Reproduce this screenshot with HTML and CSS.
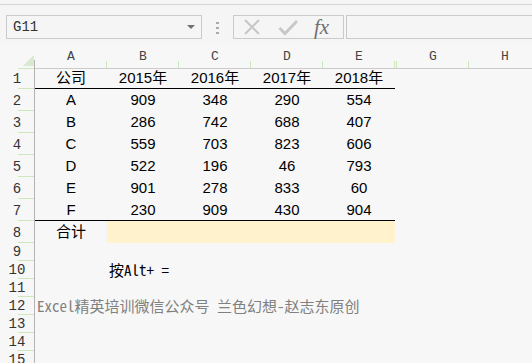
FILE: index.html
```html
<!DOCTYPE html>
<html lang="zh-CN">
<head>
    <meta charset="UTF-8">
    <title>合计 - Alt+=</title>
    <link rel="stylesheet" href="styles.css">
</head>
<body>
    <!-- Name box + formula bar -->
    <div class="toolbar">
        <div class="namebox">
            <span class="ref">G11</span>
            <span class="caret"></span>
        </div>
        <svg class="grip" width="3" height="12" viewBox="0 0 3 12">
            <rect x="0" y="0" width="3" height="2" fill="#aaa"/>
            <rect x="0" y="5" width="3" height="2" fill="#aaa"/>
            <rect x="0" y="10" width="3" height="2" fill="#aaa"/>
        </svg>
        <div class="fnbtns">
            <svg class="cancel" width="18" height="18" viewBox="0 0 18 18">
                <path d="M2 2 L16 16 M16 2 L2 16" stroke="#c8c8c8" stroke-width="2.2" fill="none"/>
            </svg>
            <svg class="enter" width="20" height="17" viewBox="0 0 20 17">
                <path d="M1.5 9 L7 14.5 L19 2" stroke="#c8c8c8" stroke-width="3" fill="none"/>
            </svg>
            <span class="fx">fx</span>
        </div>
        <div class="formula"></div>
    </div>

    <!-- Sheet -->
    <div class="sheet">
        <div class="row head">
            <div class="corner"></div>
            <div class="col">A</div>
            <div class="col">B</div>
            <div class="col">C</div>
            <div class="col">D</div>
            <div class="col">E</div>
            <div class="col"></div>
            <div class="col">G</div>
            <div class="col">H</div>
        </div>

        <div class="row tall">
            <div class="rh">1</div>
            <div class="c line">公司</div>
            <div class="c line">2015年</div>
            <div class="c line">2016年</div>
            <div class="c line">2017年</div>
            <div class="c line">2018年</div>
        </div>
        <div class="row tall">
            <div class="rh">2</div>
            <div class="c">A</div><div class="c">909</div><div class="c">348</div><div class="c">290</div><div class="c">554</div>
        </div>
        <div class="row tall">
            <div class="rh">3</div>
            <div class="c">B</div><div class="c">286</div><div class="c">742</div><div class="c">688</div><div class="c">407</div>
        </div>
        <div class="row tall">
            <div class="rh">4</div>
            <div class="c">C</div><div class="c">559</div><div class="c">703</div><div class="c">823</div><div class="c">606</div>
        </div>
        <div class="row tall">
            <div class="rh">5</div>
            <div class="c">D</div><div class="c">522</div><div class="c">196</div><div class="c">46</div><div class="c">793</div>
        </div>
        <div class="row tall">
            <div class="rh">6</div>
            <div class="c">E</div><div class="c">901</div><div class="c">278</div><div class="c">833</div><div class="c">60</div>
        </div>
        <div class="row tall">
            <div class="rh">7</div>
            <div class="c line">F</div><div class="c line">230</div><div class="c line">909</div><div class="c line">430</div><div class="c line">904</div>
        </div>
        <div class="row tall">
            <div class="rh">8</div>
            <div class="c">合计</div>
            <div class="c fill"></div><div class="c fill"></div><div class="c fill"></div><div class="c fill"></div>
        </div>

        <div class="row">
            <div class="rh">9</div>
        </div>
        <div class="row">
            <div class="rh">10</div>
            <div class="c"></div>
            <div class="c note">按Alt+ =</div>
        </div>
        <div class="row">
            <div class="rh">11</div>
        </div>
        <div class="row">
            <div class="rh">12</div>
            <div class="c note grey">Excel精英培训微信公众号 兰色幻想-赵志东原创</div>
        </div>
        <div class="row">
            <div class="rh">13</div>
        </div>
        <div class="row">
            <div class="rh">14</div>
        </div>
        <div class="row">
            <div class="rh">15</div>
        </div>
    </div>
</body>
</html>
```

FILE: styles.css
```css
/* Page */
* {
    box-sizing: border-box;
}

body {
    margin: 0;
    width: 532px;
    height: 363px;
    overflow: hidden;
    background-color: #f5f5f5;
    font-family: "Liberation Sans", "Noto Sans CJK SC", sans-serif;
    color: #000;
}

/* Toolbar: name box, buttons, formula input */
.toolbar {
    margin-top: 4px;
    height: 40px;
    padding: 10px 0 0 6px;
    border-top: 1px solid #d6d6d6;
    display: flex;
    align-items: flex-start;
}

.namebox {
    width: 196px;
    height: 24px;
    border: 1px solid #cacaca;
    padding: 0 6px 0 6px;
    display: flex;
    align-items: center;
}

.ref {
    font-family: "Liberation Mono", monospace;
    font-size: 14px;
    color: #333;
}

.caret {
    margin-left: auto;
    width: 0;
    height: 0;
    border-left: 4px solid transparent;
    border-right: 4px solid transparent;
    border-top: 4px solid #707070;
}

.grip {
    margin: 7px 0 0 14px;
}

.fnbtns {
    margin-left: 14px;
    width: 111px;
    height: 24px;
    border: 1px solid #cacaca;
    display: flex;
    align-items: center;
}

.cancel {
    margin-left: 9px;
}

.enter {
    margin-left: 17px;
}

.fx {
    margin-left: 16px;
    font-family: "Liberation Serif", serif;
    font-style: italic;
    font-size: 21px;
    color: #707070;
    line-height: 22px;
}

.formula {
    flex: 1;
    margin: 0 -6px 0 2px;
    height: 24px;
    border: 1px solid #cacaca;
}

/* Sheet grid */
.sheet {
    background-color: #f7f7f7;
}

.row {
    display: grid;
    grid-template-columns: 35px repeat(5, 72px) 2px 72px 72px;
    height: 18px;
}

.row.head {
    height: 23px;
}

.row.tall {
    height: 22px;
}

.corner {
    position: relative;
    background: linear-gradient(#b4b4b4, #b4b4b4) right bottom / 1px 9px no-repeat;
}

.corner::before {
    content: "";
    position: absolute;
    right: 1px;
    bottom: 3px;
    width: 11px;
    height: 11px;
    background-color: #d9e9d0;
    clip-path: polygon(100% 0, 100% 100%, 0 100%);
}

.corner::after,
.rh::after {
    content: "";
    position: absolute;
    left: 18px;
    bottom: 0;
    width: 16px;
    height: 1px;
    background-color: #cde8bd;
}

.col {
    position: relative;
    border-bottom: 1px solid #cbcbcb;
    text-align: center;
    font-family: "Liberation Mono", monospace;
    font-size: 13px;
    line-height: 22px;
    padding-top: 2px;
    color: #444;
}

.col::after {
    content: "";
    position: absolute;
    right: 0;
    bottom: 0;
    width: 1px;
    height: 7px;
    background-color: #cde8bd;
}

.rh {
    position: relative;
    overflow: hidden;
    border-right: 1px solid #b4b4b4;
    text-align: center;
    font-family: "Liberation Mono", monospace;
    font-size: 14px;
    line-height: 19px;
    color: #333;
}

.tall .rh {
    line-height: 24px;
}

/* Cells */
.c {
    text-align: center;
    font-size: 15px;
    line-height: 22px;
}

.c.line {
    border-bottom: 1px solid #000;
    line-height: 21px;
}

.c.fill {
    background-color: #fff2cc;
}

.c.note {
    text-align: left;
    padding-left: 2px;
    white-space: nowrap;
    font-family: "Noto Sans Mono CJK SC", "Liberation Mono", "Noto Sans CJK SC", monospace;
    line-height: 18px;
}

.c.grey {
    color: #808080;
}
```
